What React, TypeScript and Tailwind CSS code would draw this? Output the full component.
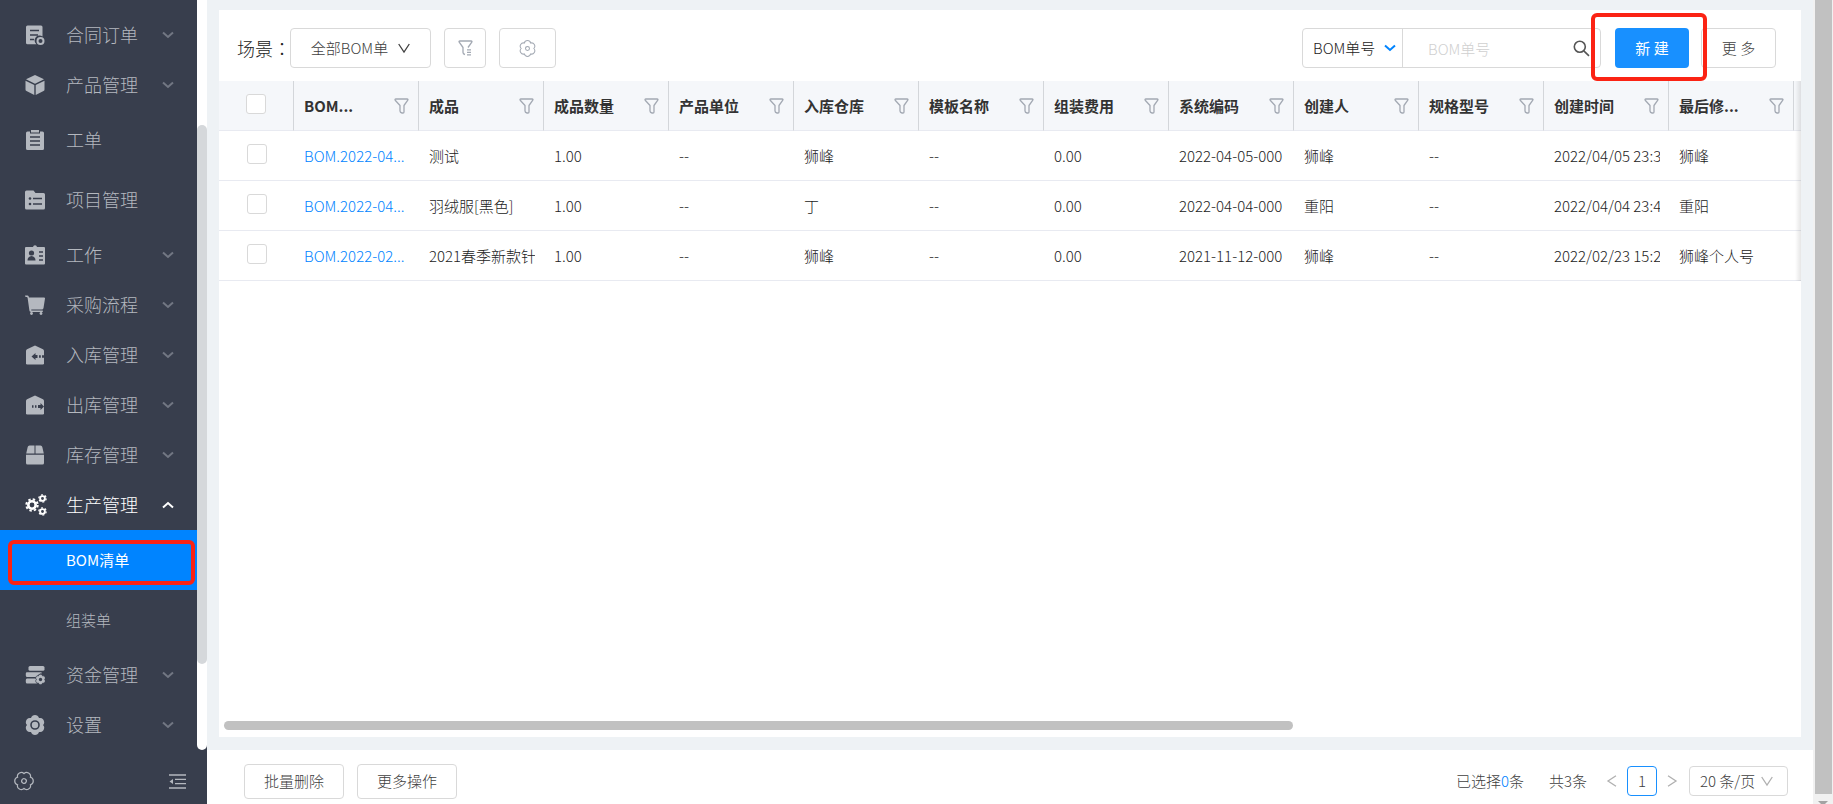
import * as React from 'react';

type IconProps = { className?: string };

function Svg({ size = 20, children, className = '' }: { size?: number; children: React.ReactNode; className?: string }) {
  return (
    <svg width={size} height={size} viewBox="0 0 20 20" fill="currentColor" className={className} aria-hidden="true">
      {children}
    </svg>
  );
}

const DARK = '#383e4d';

// six-lobed gear centred on the origin
const GEAR = 'M-4-6.930C-3-11 3-11 4-6.930C8-8.100 11-2.900 8 0C11 2.900 8 8.100 4 6.930C3 11-3 11-4 6.930C-8 8.100-11 2.900-8 0C-11-2.900-8-8.100-4-6.930z';

const ContractIcon = () => (
  <Svg>
    <path d="M3 .5h13a1.500 1.500 0 0 1 1.500 1.500v9.500a4.800 4.800 0 0 0-6 7.800H2.500A1.500 1.500 0 0 1 1 18V2A1.500 1.500 0 0 1 2.500.5z" />
    <path d="M5 5.500h9M5 10h8M5 14.500h4" stroke={DARK} strokeWidth="1.500" />
    <circle cx="15.500" cy="16" r="3" fill="none" stroke="currentColor" strokeWidth="2" />
  </Svg>
);

const CubeIcon = () => (
  <Svg>
    <path d="M10 0l9 4.300-9 4.400-9-4.400zM.5 5.800l8.800 4.200v10L1.500 16q-1-.5-1-1.500zM19.500 5.800L10.700 10v10l7.800-4q1-.5 1-1.500z" />
  </Svg>
);

const ClipboardIcon = () => (
  <Svg>
    <path d="M2.500 1.500H5v2h10v-2h2.500Q19 1.500 19 3v15.500q0 1.500-1.500 1.500h-15Q1 20 1 18.500V3q0-1.500 1.500-1.500z" />
    <path d="M6 0h8v2.500H6z" />
    <path d="M5 7h10M5 11h10M5 15h10" stroke={DARK} strokeWidth="1.500" />
  </Svg>
);

const FolderIcon = () => (
  <Svg>
    <path d="M1.500.5h7l2 2.500h8q1.500 0 1.500 1.500V18q0 1.500-1.500 1.500h-17Q0 19.500 0 18V2Q0 .5 1.500.5z" />
    <path d="M8 8.500h9M8 14h9" stroke={DARK} strokeWidth="1.600" />
    <circle cx="5" cy="8.500" r="1.300" fill={DARK} />
    <circle cx="5" cy="14" r="1.300" fill={DARK} />
  </Svg>
);

const BadgeIcon = () => (
  <Svg>
    <path d="M1 2h7q.3-1.700 2-1.700T12 2h7q1 0 1 1v15.500q0 1-1 1H1q-1 0-1-1V3q0-1 1-1z" />
    <circle cx="6.500" cy="8" r="2.600" fill={DARK} />
    <path d="M2.500 15.500q0-4 4-4.500 4 .5 4 4.500z" fill={DARK} />
    <path d="M14 7h4M14 11h4M14 15h4" stroke={DARK} strokeWidth="1.500" />
  </Svg>
);

const CartIcon = () => (
  <Svg>
    <path d="M0 .5h2.500q.8 0 1.100.8l.4 1.200h15.200q1 0 .8 1l-1.500 9.500q-.3 1.500-1.700 1.500H6.300v1h11.500v1.500H6q-1.500 0-1.600-1.400L2.600 2.800 2 2H.5z" />
    <circle cx="6.500" cy="18.500" r="1.400" />
    <circle cx="16" cy="18.500" r="1.400" />
  </Svg>
);

const StockInIcon = () => (
  <Svg>
    <path d="M10 .5l8 3.700q1 .5 1 1.500v12.500q0 1.300-1.300 1.300H2.300Q1 19.500 1 18.200V5.700q0-1 1-1.500z" />
    <path d="M6.500 11.500L10.500 8v2h2v3h-2v2zM14 10.200h1.800v2.600H14zM17 10.200h2v2.600h-2z" fill={DARK} />
  </Svg>
);

const StockOutIcon = () => (
  <Svg>
    <path d="M10 .5l8 3.700q1 .5 1 1.500v12.500q0 1.300-1.300 1.300H2.300Q1 19.500 1 18.200V5.700q0-1 1-1.500z" />
    <path d="M19 11.500L15.500 8v2h-2.500v3h2.500v2zM7 10.200h1.500v2.600H7zM10 10.200h1.500v2.600H10z" fill={DARK} />
  </Svg>
);

const BoxIcon = () => (
  <Svg>
    <path d="M4.500.5h5v8H1.200l1.500-6.500Q3 .5 4.500.5zM10.500.5h5q1.500 0 1.800 1.500l1.500 6.500h-8.300zM1 9.800h18v8.200q0 1.500-1.500 1.500h-15Q1 19.500 1 18z" />
  </Svg>
);

const GearsIcon = () => (
  <svg width="22" height="22" viewBox="0 0 22 22" fill="none" stroke="currentColor" aria-hidden="true">
    <circle cx="7" cy="11" r="3.700" strokeWidth="2.600" />
    <circle cx="7" cy="11" r="5.700" strokeWidth="2" strokeDasharray="2.400 2.080" />
    <circle cx="17.500" cy="4.500" r="2.400" strokeWidth="1.900" />
    <circle cx="17.500" cy="4.500" r="3.700" strokeWidth="1.200" strokeDasharray="1.900 1.980" />
    <circle cx="17.500" cy="17.500" r="2.400" strokeWidth="1.900" />
    <circle cx="17.500" cy="17.500" r="3.700" strokeWidth="1.200" strokeDasharray="1.900 1.980" />
  </svg>
);

const FundsIcon = () => (
  <Svg>
    <rect x="3.500" y="1" width="16" height="4.800" rx="1.500" />
    <path d="M2 7.200h13.500q1.500 0 1.500 1-3.500 0-5.500 3.800H2.200Q.8 12 .8 10.500V8.500Q.8 7.200 2 7.200zM2 13.500h9q-.3 2.500 1 5H2.200Q.8 18.500.8 17v-2Q.8 13.500 2 13.500z" />
    <g transform="translate(15.500 14.500) scale(.52)">
      <path d={GEAR} stroke={DARK} strokeWidth="1.500" />
      <circle r="3.200" fill={DARK} />
    </g>
  </Svg>
);

const SettingsIcon = () => (
  <Svg>
    <g transform="translate(10 10)">
      <path d={GEAR} />
      <circle r="4" fill="none" stroke={DARK} strokeWidth="1.600" />
    </g>
  </Svg>
);

const GearOutline = ({ size, turn = 0 }: { size: number; turn?: number }) => (
  <Svg size={size}>
    <g transform={`translate(10 10) rotate(${turn}) scale(.93)`} fill="none" stroke="currentColor" strokeWidth="1.300">
      <path d={GEAR} />
      <circle r="2.500" />
    </g>
  </Svg>
);

function Chevron({ className = '' }: IconProps) {
  return (
    <svg width="12" height="8" viewBox="0 0 12 8" fill="none" stroke="currentColor" strokeWidth="2" className={className} aria-hidden="true">
      <path d="M1 1.500l5 4.500 5-4.500" />
    </svg>
  );
}

// thin arrow used inside the bordered controls
function ThinArrow({ className = '' }: IconProps) {
  return (
    <svg width="12" height="12" viewBox="0 0 12 12" fill="none" stroke="currentColor" strokeWidth="1.300" className={className} aria-hidden="true">
      <path d="M.7 2l5.300 8 5.300-8" />
    </svg>
  );
}

function FunnelIcon() {
  return (
    <svg width="15" height="16" viewBox="0 0 15 16" fill="none" stroke="#a3a9b3" strokeWidth="1.300" strokeLinejoin="round" aria-hidden="true">
      <path d="M1.500 1h12q.8.300.3 1.200L10 7.500V14q0 1-1 1H8q-2-.5-2-2V7.500L1.200 2.200Q.7 1.300 1.500 1z" />
    </svg>
  );
}

type MenuItem = { label: string; icon: React.ReactNode; hasChildren: boolean; open?: boolean; children?: string[] };

const menu: MenuItem[] = [
  { label: '合同订单', icon: <ContractIcon />, hasChildren: true },
  { label: '产品管理', icon: <CubeIcon />, hasChildren: true },
  { label: '工单', icon: <ClipboardIcon />, hasChildren: false },
  { label: '项目管理', icon: <FolderIcon />, hasChildren: false },
  { label: '工作', icon: <BadgeIcon />, hasChildren: true },
  { label: '采购流程', icon: <CartIcon />, hasChildren: true },
  { label: '入库管理', icon: <StockInIcon />, hasChildren: true },
  { label: '出库管理', icon: <StockOutIcon />, hasChildren: true },
  { label: '库存管理', icon: <BoxIcon />, hasChildren: true },
  { label: '生产管理', icon: <GearsIcon />, hasChildren: true, open: true, children: ['BOM清单', '组装单'] },
  { label: '资金管理', icon: <FundsIcon />, hasChildren: true },
  { label: '设置', icon: <SettingsIcon />, hasChildren: true },
];

const columns = ['BOM...', '成品', '成品数量', '产品单位', '入库仓库', '模板名称', '组装费用', '系统编码', '创建人', '规格型号', '创建时间', '最后修...'];

const rows = [
  ['BOM.2022-04...', '测试', '1.00', '--', '狮峰', '--', '0.00', '2022-04-05-000', '狮峰', '--', '2022/04/05 23:3', '狮峰'],
  ['BOM.2022-04...', '羽绒服[黑色]', '1.00', '--', '丁', '--', '0.00', '2022-04-04-000', '重阳', '--', '2022/04/04 23:4', '重阳'],
  ['BOM.2022-02...', '2021春季新款针', '1.00', '--', '狮峰', '--', '0.00', '2021-11-12-000', '狮峰', '--', '2022/02/23 15:2', '狮峰个人号'],
];

function Sidebar() {
  const [active, setActive] = React.useState('BOM清单');

  return (
    <aside className="w-[207px] shrink-0 flex flex-col bg-[#383e4d] text-[#b4b8bf]">
      <div className="flex-1 min-h-0 flex">
        <nav className="flex-1 pt-2.5 overflow-hidden">
          {menu.map((item) => (
            <div key={item.label}>
              <button
                className={`w-full flex items-center pl-[25px] pr-[23px] text-lg ${item.hasChildren ? 'h-[50px]' : 'h-[60px]'} ${item.open ? 'text-white' : ''}`}
              >
                <span className="w-[41px] shrink-0">{item.icon}</span>
                <span className="flex-1 text-left pb-0.5">{item.label}</span>
                {item.hasChildren && <Chevron className={item.open ? 'rotate-180' : 'text-[#727783]'} />}
              </button>
              {item.children?.map((child) => (
                <a
                  key={child}
                  href="#"
                  onClick={() => setActive(child)}
                  className={`relative flex items-center h-[60px] pl-[66px] text-[15px] ${active === child ? 'bg-[#0084ff] text-white font-normal' : ''}`}
                >
                  {child}
                  {active === child && <span className="absolute left-2 right-0.5 top-2.5 bottom-[5px] border-4 border-[#fb2314] rounded-md" />}
                </a>
              ))}
            </div>
          ))}
        </nav>
        <div className="w-2.5 bg-white rounded-b-full pt-[125px]">
          <div className="h-[539px] rounded-full bg-[#d5d8db]" />
        </div>
      </div>
      <div className="h-[54px] flex items-center justify-between pt-2 pl-3.5 pr-[21px]">
        <button aria-label="系统设置"><GearOutline size={20} turn={30} /></button>
        <button aria-label="收起菜单">
          <svg width="17" height="15" viewBox="0 0 17 15" stroke="currentColor" fill="none" strokeWidth="1.300" aria-hidden="true">
            <path d="M0 1h17M6 5.300h11M6 9.700h11M0 14h17" />
            <path d="M4 5v5L.5 7.500z" fill="currentColor" stroke="none" />
          </svg>
        </button>
      </div>
    </aside>
  );
}

function Toolbar() {
  return (
    <div className="h-[71px] flex items-center pl-[18px] pr-[25px] text-[15px] text-[#404040] pt-[5px]">
      <span className="text-lg text-[#222] w-[53px] shrink-0 whitespace-nowrap">
        场景<span className="font-['Noto_Sans_CJK_TC',sans-serif]">：</span>
      </span>
      <button className="h-10 w-[141px] border border-[#d9d9d9] rounded flex items-center justify-center gap-2.5">
        全部BOM单
        <ThinArrow />
      </button>
      <button aria-label="高级筛选" className="ml-[13px] h-10 w-[42px] border border-[#d9d9d9] rounded flex items-center justify-center text-[#a3a9b3]">
        <svg width="15" height="16" viewBox="0 0 15 16" fill="none" stroke="currentColor" strokeWidth="1.300" strokeLinejoin="round" aria-hidden="true">
          <path d="M7 14.500q-2-.5-2-2V7.500L1.200 2.200Q.7 1.300 1.500 1h12q.8.300.3 1.200L10 7.500" />
          <path d="M9 9.800h4M9 12.300h4M9 14.800h4" />
        </svg>
      </button>
      <button aria-label="列设置" className="ml-[13px] h-10 w-[57px] border border-[#d9d9d9] rounded flex items-center justify-center text-[#a3a9b3]">
        <GearOutline size={17} />
      </button>

      <div className="ml-auto h-10 w-[299px] border border-[#d9d9d9] rounded flex items-center">
        <label className="relative h-full w-[100px] border-r border-[#d9d9d9] flex items-center">
          <select aria-label="搜索字段" className="appearance-none w-full h-full pl-2.5 text-[#222] bg-transparent">
            <option>BOM单号</option>
          </select>
          <Chevron className="absolute right-1.5 text-[#0084ff] pointer-events-none" />
        </label>
        <input aria-label="BOM单号" placeholder="BOM单号" className="flex-1 min-w-0 h-full pl-[25px] outline-none placeholder:text-[#d0d0d0]" />
        <button aria-label="搜索" className="mr-2.5">
          <svg width="17" height="17" viewBox="0 0 17 17" fill="none" stroke="#555" strokeWidth="1.600" aria-hidden="true">
            <circle cx="6.800" cy="6.800" r="5.500" />
            <path d="M10.800 10.800l5.200 5" />
          </svg>
        </button>
      </div>
      <div className="relative ml-3.5">
        <button className="h-10 w-[74px] rounded bg-[#1890ff] text-white font-normal">新 建</button>
        <span className="absolute -left-6 -right-[18px] -top-[15px] -bottom-[13px] z-10 border-4 border-[#fb2314] rounded-md pointer-events-none" />
      </div>
      <button className="ml-3 h-10 w-[75px] rounded border border-[#d9d9d9]">更 多</button>
    </div>
  );
}

function Checkbox({ label }: { label: string }) {
  return <input type="checkbox" aria-label={label} className="block mx-auto size-5 appearance-none bg-white border border-[#d9d9d9] rounded-[3px] checked:bg-[#1890ff]" />;
}

function BomTable() {
  return (
    <div className="relative overflow-hidden">
      <table className="w-full table-fixed border-separate border-spacing-0 text-[15px] text-[#222]">
        <colgroup>
          <col className="w-[75px]" />
          {columns.map((c) => <col key={c} className="w-[125px]" />)}
          <col />
        </colgroup>
        <thead className="bg-[#f5f7fa]">
          <tr className="h-[50px]">
            <th className="border-b border-[#e8eaf1] border-r border-r-[#d3d6da] pb-1"><Checkbox label="全选" /></th>
            {columns.map((c) => (
              <th key={c} className="border-b border-[#e8eaf1] border-r border-r-[#d3d6da] pl-2.5 pr-[9px] text-left font-bold text-[#333]">
                <div className="flex items-center justify-between">
                  <span className="pt-0.5 whitespace-nowrap">{c}</span>
                  <button aria-label={`筛选${c}`}><FunnelIcon /></button>
                </div>
              </th>
            ))}
            <th className="border-b border-[#e8eaf1]" />
          </tr>
        </thead>
        <tbody>
          {rows.map((row, r) => (
            <tr key={r} className="h-[50px]">
              <td className="border-b border-[#e8eaf1] pb-1"><Checkbox label={`选择第${r + 1}行`} /></td>
              {row.map((cell, i) => (
                <td key={i} className="border-b border-[#e8eaf1] pl-2.5 pr-[9px] pt-0.5">
                  {i === 0
                    ? <a href="#" className="block whitespace-nowrap text-[#0084ff]">{cell}</a>
                    : <div className="overflow-hidden whitespace-nowrap">{cell}</div>}
                </td>
              ))}
              <td className="border-b border-[#e8eaf1]" />
            </tr>
          ))}
        </tbody>
      </table>
      <div className="absolute right-0 inset-y-0 w-1.5 bg-linear-to-r from-transparent to-black/10" />
    </div>
  );
}

function Footer() {
  return (
    <footer className="h-[54px] shrink-0 bg-white flex items-center pt-2 pl-[37px] pr-[25px] text-[15px] text-[#404040]">
      <button className="h-[35px] w-[100px] border border-[#d9d9d9] rounded">批量删除</button>
      <button className="ml-[13px] h-[35px] w-[100px] border border-[#d9d9d9] rounded">更多操作</button>
      <span className="ml-auto">已选择<span className="text-[#0084ff]">0</span>条</span>
      <span className="ml-[25px]">共3条</span>
      <button aria-label="上一页" className="ml-[19px] text-[#b0b0b0]"><ThinArrow className="rotate-90" /></button>
      <button className="ml-[9px] size-[30px] border border-[#1890ff] rounded">1</button>
      <button aria-label="下一页" className="ml-[9px] text-[#b0b0b0]"><ThinArrow className="-rotate-90" /></button>
      <label className="relative ml-[11px] flex items-center">
        <select aria-label="每页条数" className="appearance-none h-[30px] w-[99px] pl-2.5 border border-[#d9d9d9] rounded bg-white">
          <option>20 条/页</option>
        </select>
        <ThinArrow className="absolute right-[15px] text-[#b0b0b0] pointer-events-none" />
      </label>
    </footer>
  );
}

export default function App() {
  return (
    <div className="h-screen flex overflow-hidden bg-[#eef2f5] font-['Noto_Sans_CJK_SC',sans-serif] font-light">
      <Sidebar />
      <main className="flex-1 min-w-0 flex flex-col">
        <div className="flex-1 min-h-0 pt-2.5 pb-[13px] px-3 flex flex-col">
          <section className="flex-1 min-h-0 bg-white flex flex-col">
            <Toolbar />
            <BomTable />
            <div className="mt-auto mb-[7px] mx-[5px]">
              <div className="h-[9px] w-[68%] rounded-full bg-[#c1c1c1]" />
            </div>
          </section>
        </div>
        <Footer />
      </main>
      <div className="w-5 shrink-0 flex flex-col items-center bg-[#f1f1f1]">
        <div className="w-[17px] flex-1 bg-[#c1c1c1]" />
        <div className="h-2.5 w-full flex items-end justify-center">
          <svg width="10" height="3" viewBox="0 0 10 3" fill="#a3a3a3" aria-hidden="true"><path d="M0 0h10L7 3H3z" /></svg>
        </div>
      </div>
    </div>
  );
}
